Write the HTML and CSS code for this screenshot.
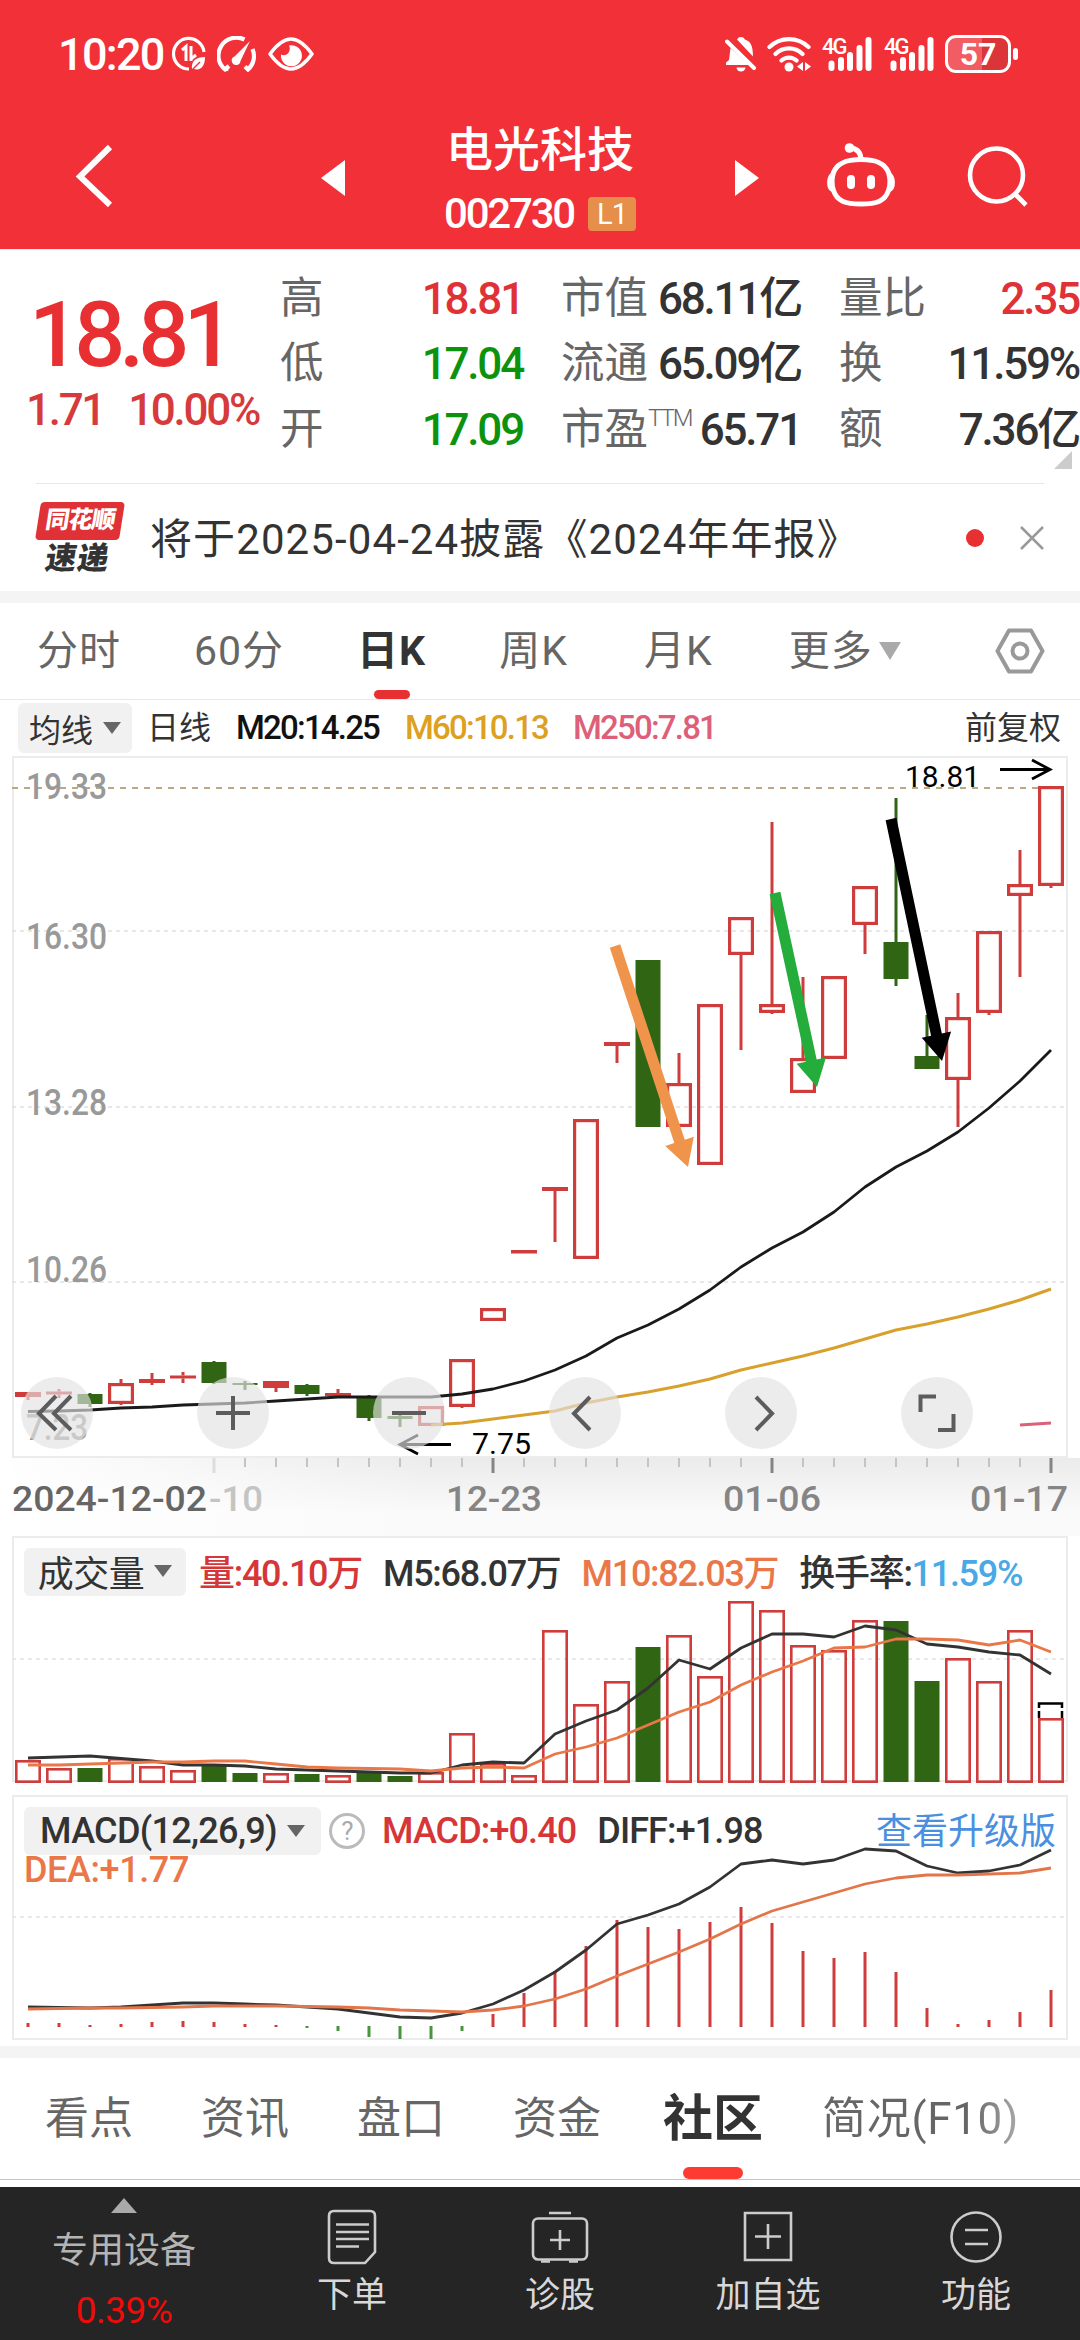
FILE: index.html
```
<!DOCTYPE html>
<html lang="zh-CN">
<head>
    <meta charset="UTF-8">
    <meta name="viewport" content="width=device-width, initial-scale=1.0">
    <title>电光科技 002730</title>
    <link rel="stylesheet" href="styles.css">
</head>
<body>
    <header class="top">
        <div class="status">
            <div class="status-left">
                <span class="clock">10:20</span>
                <svg width="36" height="36" viewBox="0 0 36 36" fill="none" stroke="#fff" stroke-width="3.2">
                    <path d="M33 16A15.3 15.3 0 1 0 18 33"/>
                    <path d="M11 14l4-3.5V25M20 10v15M20 23l5-4" stroke-width="3"/>
                    <path d="M21 33c-1-8 4-12 13-12 0 9-4 14-11 12z" fill="#fff" stroke="none"/>
                    <path d="M21 34l8-8" stroke="#f23037" stroke-width="1.5"/>
                </svg>
                <svg class="gauge" width="40" height="36" viewBox="0 0 40 36" fill="none" stroke="#fff" stroke-width="4.2">
                    <path d="M11 32.500l-3 1A18 18 0 0 1 27.500 3.500M35.500 13a18 18 0 0 1-4.500 20.500l-3-3"/>
                    <path d="M7 34l5-4" />
                    <path d="M33 5L23.500 25a4.400 4.400 0 1 1-6-4.500z" fill="#fff" stroke="none"/>
                </svg>
                <svg width="46" height="34" viewBox="0 0 46 34">
                    <path d="M2 17C10 6 17 2 23 2s13 4 21 15C36 28 29 32 23 32S10 28 2 17z" fill="none" stroke="#fff" stroke-width="3.500" stroke-linejoin="round"/>
                    <path d="M21 8.500a10.500 10.500 0 1 1-8 9c5 3 11-3 8-9z" fill="#fff"/>
                </svg>
            </div>
            <div class="status-right">
                <svg width="32" height="36" viewBox="0 0 32 36" fill="#fff">
                    <path d="M12 3.500a4.500 4.500 0 0 1 8 0c6 2 8 7 8 17z"/>
                    <path d="M5.500 12L24 29H1v-2.500l3-2.500z"/>
                    <path d="M2 5.500L29 32" stroke="#fff" stroke-width="4" stroke-linecap="round"/>
                    <path d="M11.500 31.500h9a4.500 4 0 0 1-9 0z"/>
                </svg>
                <svg class="wifi" width="44" height="36" viewBox="0 0 44 36" fill="none" stroke="#fff" stroke-width="4.200" stroke-linecap="round">
                    <path d="M2.500 11a28 28 0 0 1 39 0M8.500 18a19 19 0 0 1 27 0M14.500 24.500a11 11 0 0 1 15 0"/>
                    <circle cx="22" cy="31" r="4.500" fill="#fff" stroke="none"/>
                    <path d="M36 26v9l-6-4.500zM38 26v9l6-4.500z" fill="#fff" stroke="none"/>
                </svg>
                <svg class="sim" width="50" height="36" viewBox="0 0 50 36" stroke="#fff" stroke-width="6" stroke-linecap="round">
                    <text class="net" x="0" y="18">4G</text>
                    <path d="M9.500 27.500v4.500M19 24v8M28 19v13M37.500 12v20M46.500 4v28"/>
                </svg>
                <svg class="sim sim2" width="50" height="36" viewBox="0 0 50 36" stroke="#fff" stroke-width="6" stroke-linecap="round">
                    <text class="net" x="0" y="18">4G</text>
                    <path d="M9.500 27.500v4.500M19 24v8M28 19v13M37.500 12v20M46.500 4v28"/>
                </svg>
                <div class="battery"><span>57</span></div>
                <i class="battery-cap"></i>
            </div>
        </div>
        <div class="title-bar">
            <svg class="back" width="40" height="66" viewBox="0 0 40 66" fill="none" stroke="#fff" stroke-width="6">
                <path d="M35 4L5 33.500 35 62"/>
            </svg>
            <svg class="prev" width="24" height="38" viewBox="0 0 24 38"><path d="M24 1v36L0 19z" fill="#fff"/></svg>
            <div class="stock">
                <h1>电光科技</h1>
                <p><span>002730</span><b>L1</b></p>
            </div>
            <svg class="next" width="24" height="38" viewBox="0 0 24 38"><path d="M0 1v36l24-18z" fill="#fff"/></svg>
            <svg class="robot" width="72" height="66" viewBox="0 0 72 66" fill="none" stroke="#fff" stroke-width="5">
                <path d="M36 16.500c16 0 24 4 27.500 13 2 6 2 12 0 18C60 58 52 61 36 61S12 58 8.500 47.500c-2-6-2-12 0-18C12 20.500 20 16.500 36 16.500z"/>
                <path d="M36 17c0-7-3-11-10-12" />
                <circle cx="24.500" cy="5" r="4.800" fill="#fff" stroke="none"/>
                <path d="M8 30c-6 1-7 17 0 18zM64 30c6 1 7 17 0 18z" fill="#fff" stroke-width="2"/>
                <path d="M26 36v6M46 36v6" stroke-width="8" stroke-linecap="round"/>
            </svg>
            <svg class="search" width="62" height="66" viewBox="0 0 62 66" fill="none" stroke="#fff" stroke-width="4.600">
                <circle cx="29.500" cy="32" r="26.500"/>
                <path d="M48 51l11 11"/>
            </svg>
        </div>
    </header>

    <section class="quote">
        <div class="price up">
            <strong>18.81</strong>
            <p><span>1.71</span><span>10.00%</span></p>
        </div>
        <dl class="stats">
            <div><dt>高</dt><dd class="up">18.81</dd></div>
            <div><dt>市值</dt><dd>68.11亿</dd></div>
            <div><dt>量比</dt><dd class="up">2.35</dd></div>
            <div><dt>低</dt><dd class="down">17.04</dd></div>
            <div><dt>流通</dt><dd>65.09亿</dd></div>
            <div><dt>换</dt><dd>11.59%</dd></div>
            <div><dt>开</dt><dd class="down">17.09</dd></div>
            <div><dt>市盈<sup>TTM</sup></dt><dd>65.71</dd></div>
            <div><dt>额</dt><dd>7.36亿</dd></div>
        </dl>
        <i class="more-corner"></i>
    </section>

    <section class="news">
        <div class="news-logo">
            <span class="logo-top">同花顺</span>
            <span class="logo-bottom">速递</span>
        </div>
        <p>将于2025-04-24披露《2024年年报》</p>
        <i class="dot"></i>
        <svg width="24" height="26" viewBox="0 0 24 26" stroke="#999" stroke-width="2.500"><path d="M1 2l22 22M23 2L1 24"/></svg>
    </section>

    <nav class="period">
        <a>分时</a>
        <a>60分</a>
        <a class="on">日K</a>
        <a>周K</a>
        <a>月K</a>
        <a>更多<i class="tri"></i></a>
        <svg width="50" height="46" viewBox="0 0 50 46" fill="none" stroke="#999" stroke-width="4">
            <path d="M14 2.500h22L47.500 23 36 43.500H14L2.500 23z" stroke-linejoin="round"/>
            <circle cx="25" cy="23" r="7.500"/>
        </svg>
    </nav>

    <div class="ma-row">
        <button class="pick">均线<i class="tri"></i></button>
        <span class="ma-name">日线</span>
        <span class="ma20">M20:14.25</span>
        <span class="ma60">M60:10.13</span>
        <span class="ma250">M250:7.81</span>
        <span class="fq">前复权</span>
    </div>

    <div class="panel kline">
        <svg id="kline" viewBox="12 756 1056 702"></svg>
        <div class="tools">
            <button><svg viewBox="0 0 72 72"><path d="M35 19L18 36.500 35 53M50 19L33 36.500 50 53"/></svg></button>
            <button><svg viewBox="0 0 72 72"><path d="M19 36h34M36 19v34"/></svg></button>
            <button><svg viewBox="0 0 72 72"><path d="M19 36h34"/></svg></button>
            <button><svg viewBox="0 0 72 72"><path d="M41 20L25 36.500 41 53"/></svg></button>
            <button><svg viewBox="0 0 72 72"><path d="M31 20l16 16.500L31 53"/></svg></button>
            <button><svg viewBox="0 0 72 72"><path d="M35 19.500H19.500V35M37 53h15.500V37"/></svg></button>
        </div>
    </div>

    <div class="axis"><svg id="axis" viewBox="0 1458 1080 78"></svg></div>

    <div class="panel volume">
        <svg id="volume" viewBox="12 1536 1056 246"></svg>
        <div class="legend">
            <button class="pick">成交量<i class="tri"></i></button>
            <span class="red">量:40.10万</span>
            <span>M5:68.07万</span>
            <span class="orange">M10:82.03万</span>
            <span>换手率:<em>11.59%</em></span>
        </div>
    </div>

    <div class="panel macd">
        <svg id="macd" viewBox="12 1795 1056 245"></svg>
        <div class="legend">
            <button class="pick">MACD(12,26,9)<i class="tri"></i></button>
            <i class="help">?</i>
            <span class="red">MACD:+0.40</span>
            <span>DIFF:+1.98</span>
            <a class="upgrade">查看升级版</a>
        </div>
        <div class="dea orange">DEA:+1.77</div>
    </div>

    <nav class="info-tabs">
        <a>看点</a>
        <a>资讯</a>
        <a>盘口</a>
        <a>资金</a>
        <a class="on">社区</a>
        <a class="fade">简况(F10)</a>
    </nav>

    <footer class="bottom">
        <div class="sector">
            <i></i>
            <span>专用设备</span>
            <b>0.39%</b>
        </div>
        <div class="item">
            <svg width="50" height="56" viewBox="0 0 50 56">
                <path d="M7 2h36q5 0 5 5v36L38 54H7q-5 0-5-5V7q0-5 5-5z"/>
                <path d="M9 15.500h33M9 23h33M9 30h33M9 37.500h23"/>
            </svg>
            <span>下单</span>
        </div>
        <div class="item">
            <svg width="58" height="56" viewBox="0 0 58 56">
                <rect x="2" y="9.500" width="54" height="41" rx="5"/>
                <path d="M18 4h22M29 21v20M19 31h20M10 52.500h9M38 52.500h9"/>
            </svg>
            <span>诊股</span>
        </div>
        <div class="item">
            <svg width="50" height="56" viewBox="0 0 50 56">
                <path d="M2 4h46v47H2zM25 15v25M12 27.500h26"/>
            </svg>
            <span>加自选</span>
        </div>
        <div class="item">
            <svg width="52" height="56" viewBox="0 0 52 56">
                <circle cx="26" cy="28" r="24.500"/>
                <path d="M15 21h23M15 35h23"/>
            </svg>
            <span>功能</span>
        </div>
    </footer>

    <script src="chart.js"></script>
</body>
</html>
```
FILE: styles.css
```
* {
    box-sizing: border-box;
    margin: 0;
    padding: 0;
}
body {
    width: 1080px;
    height: 2340px;
    overflow: hidden;
    background: #fff;
    color: #333;
    font-family: Roboto, "Noto Sans CJK SC", sans-serif;
}
svg {
    display: block;
    flex: none;
}
button {
    border: 0;
    font-family: inherit;
    color: inherit;
}
i, em {
    font-style: normal;
}
.up { color: #e03236; }
.down { color: #0d920d; }
.red { color: #d63638; }
.orange { color: #ea7747; }

/* header */
.top {
    height: 250px;
    background: #f23037;
    border-bottom: 1px solid #ffe4e8;
    color: #fff;
}
.status {
    height: 108px;
    padding: 0 62px 0 58px;
    display: flex;
    justify-content: space-between;
    align-items: center;
}
.status-left, .status-right {
    display: flex;
    align-items: center;
}
.clock {
    width: 113px;
    font-size: 45px;
    font-weight: 500;
    letter-spacing: -1.7px;
}
.gauge { margin: 0 11px 0 10px; }
.wifi { margin: 0 11px 0 10px; }
.sim { overflow: visible; }
.sim2 { margin: 0 11px 0 12px; }
.net {
    font-size: 22px;
    font-weight: 500;
    letter-spacing: -2px;
    fill: #fff;
    stroke: none;
}
.battery {
    width: 66px;
    height: 38px;
    border: 3px solid #fff;
    border-radius: 11px;
    background: linear-gradient(90deg, #f15d62 57%, #db353a 57%);
    text-align: center;
    font-size: 32px;
    line-height: 33px;
    font-weight: 700;
}
.battery-cap {
    width: 5px;
    height: 12px;
    margin-left: 2px;
    border-radius: 3px;
    background: #fff;
}
.title-bar {
    display: flex;
    height: 135px;
    align-items: center;
    padding-left: 75px;
}
.prev { margin: 4px 0 0 206px; }
.stock {
    width: 390px;
    padding-top: 12px;
    text-align: center;
}
.stock h1 {
    font-size: 47px;
    line-height: 60px;
    font-weight: 500;
}
.stock p {
    display: flex;
    justify-content: center;
    align-items: center;
    height: 60px;
    margin-top: 4px;
    font-size: 42px;
    font-weight: 500;
    letter-spacing: -2.2px;
}
.stock b {
    width: 48px;
    height: 34px;
    margin-left: 14px;
    border-radius: 4px;
    background: #e58f4a;
    font-size: 29px;
    line-height: 34px;
    font-weight: 400;
    letter-spacing: -1px;
}
.next { margin-top: 4px; }
.robot { margin-left: 66px; }
.search { margin-left: 70px; }

/* quote */
.quote {
    position: relative;
    display: flex;
    height: 233px;
    padding-top: 16px;
}
.price {
    width: 280px;
    padding-left: 29px;
}
.price strong {
    display: block;
    height: 104px;
    margin-top: 18px;
    font-size: 90px;
    line-height: 104px;
    font-weight: 500;
    letter-spacing: -6px;
    color: #e83032;
}
.price p {
    display: flex;
    justify-content: space-between;
    width: 233px;
    margin: -1px 0 0 -3px;
    font-size: 44px;
    line-height: 46px;
    font-weight: 500;
    letter-spacing: -2.3px;
    color: #d63a3c;
}
.stats {
    display: grid;
    grid-template-columns: 243px 240px 240px;
    column-gap: 38px;
    grid-auto-rows: 65.5px;
}
.stats div {
    display: flex;
    justify-content: space-between;
    align-items: center;
    font-size: 43.5px;
    line-height: 60px;
    white-space: nowrap;
}
.stats dt { color: #666; }
.stats dd {
    font-size: 44px;
    font-weight: 500;
    letter-spacing: -2.2px;
}
.stats sup {
    font-size: 24px;
    font-weight: 300;
    line-height: 1;
    vertical-align: 18px;
    letter-spacing: -2px;
}
.more-corner {
    position: absolute;
    right: 8px;
    bottom: 14px;
    border-left: 18px solid transparent;
    border-bottom: 18px solid #ccc;
}

/* news */
.news {
    display: flex;
    align-items: center;
    height: 108px;
    margin: 0 36px;
    border-top: 1px solid #e8e8e8;
}
.news-logo {
    width: 90px;
    margin-right: 24px;
    padding-left: 2px;
}
.news-logo span {
    display: block;
    font-weight: 900;
    text-align: center;
    transform: skewX(-9deg);
}
.logo-top {
    width: 84px;
    height: 38px;
    border-radius: 4px;
    background: #e03236;
    color: #fff;
    font-size: 24px;
    line-height: 37px;
    letter-spacing: -1px;
}
.logo-bottom {
    width: 80px;
    height: 34px;
    font-size: 31px;
    line-height: 38px;
    letter-spacing: 1px;
}
.news p {
    flex: 1;
    margin-top: -5px;
    font-size: 42px;
    letter-spacing: 1.1px;
    white-space: nowrap;
}
.dot {
    width: 18px;
    height: 18px;
    margin-right: 36px;
    border-radius: 50%;
    background: #e83032;
}

/* period tabs */
.period {
    display: flex;
    align-items: center;
    height: 109px;
    padding-left: 37px;
    border-top: 12px solid #f4f4f4;
    border-bottom: 1px solid #e8e8e8;
    font-size: 41px;
    letter-spacing: 1px;
    color: #666;
}
.period a {
    position: relative;
    margin-right: 73px;
    line-height: 96px;
}
.period a:nth-child(n+4) { margin-right: 76px; }
.period a:nth-child(6) {
    display: flex;
    align-items: center;
    margin-right: 94px;
}
.period .on, .info-tabs .on {
    color: #333;
    font-weight: 700;
}
.period .on::after, .info-tabs .on::after {
    content: '';
    position: absolute;
    left: 50%;
    bottom: 0;
    width: 36px;
    height: 9px;
    margin-left: -18px;
    border-radius: 5px;
    background: #e83032;
}
.tri {
    display: inline-block;
    border: 9px solid transparent;
    border-top: 12px solid #666;
    border-bottom: 0;
}
.period .tri {
    margin-left: 6px;
    border-width: 18px 11px 0;
    border-top-color: #aaa;
}

/* moving averages */
.ma-row {
    display: flex;
    align-items: center;
    height: 56px;
    padding: 0 19px 0 18px;
    font-size: 33px;
    line-height: 54px;
    font-weight: 500;
    letter-spacing: -1.8px;
}
.pick {
    display: flex;
    justify-content: center;
    align-items: center;
    border-radius: 6px;
    background: #f1f1f1;
    font-size: 32px;
}
.pick .tri { margin-left: 10px; }
.ma-row .pick {
    width: 114px;
    height: 50px;
    letter-spacing: 0;
}
.ma-row .ma-name, .ma-row .fq { font-weight: 400; letter-spacing: 0; font-size: 32px; }
.ma-name { margin-left: 15px; }
.ma20 { margin-left: 25px; color: #111; width: 169px; }
.ma60 { color: #dda01f; width: 168px; }
.ma250 { color: #dd6078; }
.fq { margin-left: auto; }

/* chart panels */
.panel {
    position: relative;
    margin: 0 12px;
    border: 2px solid #ececec;
}
.panel > svg {
    position: absolute;
    left: -2px;
    top: -2px;
    width: 1056px;
    overflow: visible;
}
.kline { height: 702px; }
.tools {
    position: absolute;
    left: 7px;
    bottom: 7px;
    display: flex;
    gap: 104px;
}
.tools button {
    width: 72px;
    height: 72px;
    border-radius: 50%;
    background: rgba(226, 226, 226, .66);
}
.tools svg {
    fill: none;
    stroke: #5c5c5c;
    stroke-width: 4;
}
.axis {
    height: 78px;
    background: linear-gradient(90deg, #fff, rgba(255, 255, 255, 0) 40%), linear-gradient(#ebebeb, #fafafa 70%);
}
.volume { height: 246px; background: #fff; }
.macd { height: 245px; margin-top: 13px; }
.legend {
    position: relative;
    display: flex;
    align-items: center;
    height: 48px;
    margin-top: 10px;
    padding-left: 10px;
    font-size: 36px;
    font-weight: 500;
    letter-spacing: -1.3px;
    white-space: nowrap;
}
.volume .pick {
    width: 162px;
    height: 48px;
    margin-right: 13px;
    padding-bottom: 3px;
    font-size: 36px;
    letter-spacing: -.5px;
}
.volume .legend span {
    margin: -5px 21px 0 0;
}
.legend em { color: #48a9e6; }
.macd .legend { letter-spacing: -.9px; }
.macd .pick {
    width: 297px;
    height: 48px;
    margin-right: 8px;
    font-size: 36px;
    font-weight: 500;
    letter-spacing: -.7px;
}
.help {
    width: 36px;
    height: 36px;
    margin-right: 17px;
    border: 3px solid #bbb;
    border-radius: 50%;
    color: #aaa;
    font-size: 26px;
    font-weight: 400;
    line-height: 31px;
    text-align: center;
}
.macd .legend span { margin-right: 21px; }
.legend .upgrade {
    margin: -6px 0 0 auto;
    padding-right: 10px;
    color: #4a8fe0;
    font-weight: 400;
    letter-spacing: 0;
}
.dea {
    position: relative;
    margin-left: 10px;
    font-size: 36px;
    font-weight: 500;
    line-height: 31px;
    letter-spacing: -.4px;
}

/* chart texts, drawn by chart.js */
.y-label { font-size: 36px; font-weight: 500; fill: #999; }
.x-label { font-size: 35px; font-weight: 500; fill: #858585; }
.x-first { fill: #666; }
.x-faded { fill: #c4c4c4; }
.mark { font-size: 30px; fill: #000; }

/* info tabs */
.info-tabs {
    display: flex;
    align-items: center;
    height: 134px;
    margin-top: 6px;
    padding-left: 45px;
    border-top: 12px solid #f4f4f4;
    border-bottom: 1px solid #c4c4c4;
    font-size: 44px;
    color: #666;
}
.info-tabs a {
    position: relative;
    margin-right: 68px;
    line-height: 120px;
    white-space: nowrap;
}
.info-tabs a:nth-child(4) { margin-right: 62px; }
.info-tabs .on { font-size: 50px; margin-right: 59px; }
.info-tabs .on::after {
    width: 60px;
    height: 12px;
    margin-left: -30px;
    border-radius: 6px;
    background: #fd3b33;
}
.info-tabs .fade {
    letter-spacing: .7px;
    background: linear-gradient(90deg, #666 75%, #aaa);
    -webkit-background-clip: text;
    background-clip: text;
    color: transparent;
}

/* bottom bar */
.bottom {
    display: grid;
    grid-template-columns: 248px repeat(4, 208px);
    height: 153px;
    margin-top: 7px;
    background: #252525;
    color: #d8d8d8;
    font-size: 35px;
    text-align: center;
}
.sector {
    display: flex;
    flex-direction: column;
    align-items: center;
    padding-top: 11px;
    color: #b4b4b4;
}
.sector i {
    border: 13px solid transparent;
    border-top: 0;
    border-bottom: 15px solid #aaa;
}
.sector span {
    margin-top: 14px;
    font-size: 36px;
    line-height: 48px;
}
.sector b {
    margin-top: 12px;
    color: #f10a0a;
    font-size: 37px;
    line-height: 48px;
    font-weight: 400;
    letter-spacing: -.5px;
}
.item {
    display: flex;
    flex-direction: column;
    align-items: center;
    padding-top: 22px;
}
.item svg {
    fill: none;
    stroke: #ccc;
    stroke-width: 2.6;
}
.item span {
    margin-top: 7px;
    line-height: 48px;
}
```
FILE: chart.js
```
var RED = "#cf3c3c";
var GREEN = "#306514";
var STEP = 31;
var FIRST = 28;

function cx(i) {
    return FIRST + i * STEP;
}
function rect(x, y, w, h, fill) {
    return `<rect x="${x}" y="${y}" width="${w}" height="${h}" fill="${fill}"/>`;
}
function box(i, top, bottom, sw) {
    return `<rect x="${cx(i) - 13 + sw / 2}" y="${top + sw / 2}" width="${26 - sw}" height="${bottom - top - sw}" fill="none" stroke="${RED}" stroke-width="${sw}"/>`;
}
// hollow bar for a rising day, solid bar for a falling one
function bar(i, top, bottom, up) {
    if (!up) return rect(cx(i) - 12.5, top, 25, bottom - top, GREEN);
    if (bottom - top <= 8) return rect(cx(i) - 13, top, 26, bottom - top, RED);
    return box(i, top, bottom, 3.2);
}
function line(ys, start, color, w) {
    var pts = ys.map((y, k) => cx(start + k) + "," + y).join(" ");
    return `<polyline points="${pts}" fill="none" stroke="${color}" stroke-width="${w}" stroke-linejoin="round"/>`;
}
function grid(y, color, w, dash) {
    return `<path d="M12 ${y}H1066" stroke="${color}" stroke-width="${w}" stroke-dasharray="${dash}"/>`;
}
function label(x, y, text, cls, len) {
    return `<text x="${x}" y="${y}" class="${cls}" textLength="${len}" lengthAdjust="spacingAndGlyphs">${text}</text>`;
}
// trend arrow: thick line with a triangle head
function arrow(x1, y1, x2, y2, color) {
    var len = Math.hypot(x2 - x1, y2 - y1);
    var deg = Math.atan2(y2 - y1, x2 - x1) * 180 / Math.PI;
    return `<path transform="translate(${x1} ${y1}) rotate(${deg})" fill="${color}" d="M0 -5.500H${len - 27}V-15L${len} 0L${len - 27} 15V5.500H0z"/>`;
}

// [high, body top, body bottom, low, rising]
var candles = [
    [1392, 1392, 1397, 1400, 1], [1389, 1391.5, 1394.5, 1398, 1], [1393, 1394, 1404, 1407, 0],
    [1379, 1383, 1404, 1405, 1], [1373, 1379, 1383, 1385, 1], [1372, 1375.5, 1378.5, 1383, 1],
    [1361, 1362, 1383, 1384, 0], [1381, 1383, 1385, 1390, 0], [1381, 1381, 1388, 1392, 1],
    [1384, 1385, 1394, 1396, 0], [1389, 1393, 1396, 1397, 1], [1395, 1397, 1418, 1421, 0],
    [1412, 1416, 1419, 1427, 0], [1406, 1406, 1426, 1426, 1], [1359, 1359, 1407, 1408, 1],
    [1308, 1308, 1321, 1321, 1], [1250, 1250, 1253.5, 1253.5, 1], [1187, 1187, 1191, 1242, 1],
    [1119, 1119, 1259, 1259, 1], [1042, 1042, 1046, 1063, 1], [960, 960, 1127, 1127, 0],
    [1053, 1083, 1127, 1127, 1], [1004, 1004, 1165, 1165, 1], [917, 917, 955, 1050, 1],
    [822, 1004, 1013, 1014, 1], [977, 1058, 1093, 1093, 1], [976, 976, 1059, 1059, 1],
    [886, 886, 925, 954, 1], [798, 942, 979, 986, 0], [1015, 1056, 1069, 1069, 0],
    [993, 1017, 1080, 1127, 1], [931, 931, 1013, 1015, 1], [850, 884, 896, 977, 1],
    [786, 786, 886, 888, 1]
];
var ma20 = [1411.5, 1411, 1410, 1408, 1407, 1405, 1404, 1403, 1401, 1399, 1397, 1397, 1397, 1397, 1394, 1389, 1381, 1370, 1356, 1338, 1325, 1309, 1290, 1267, 1248, 1232, 1212, 1187, 1167, 1151, 1132, 1108, 1081, 1050];
var ma60 = [1425, 1423, 1419, 1415, 1411, 1403, 1397, 1392, 1386, 1379, 1370, 1363, 1356, 1348, 1339, 1330, 1324, 1317, 1309, 1300, 1289];

function drawKline() {
    var s = grid(788, "#bba985", 2, "6 6");
    [931, 1107, 1282].forEach(y => s += grid(y, "#e0e0e0", 1.5, "4 4"));
    [["19.33", 799], ["16.30", 949], ["13.28", 1115], ["10.26", 1282], ["7.23", 1440]].forEach(l => {
        s += label(26, l[1], l[0], "y-label", l[0].length > 4 ? 81 : 62);
    });
    candles.forEach((c, i) => {
        var color = c[4] ? RED : GREEN;
        if (c[1] > c[0]) s += rect(cx(i) - 1.5, c[0], 3, c[1] - c[0], color);
        if (c[3] > c[2]) s += rect(cx(i) - 1.5, c[2], 3, c[3] - c[2], color);
        s += bar(i, c[1], c[2], c[4]);
    });
    s += line(ma20, 0, "#1a1a1a", 2.8);
    s += line(ma60, 13, "#d8a02c", 3);
    s += line([1425, 1423], 32, "#dd6078", 3);
    s += label(905, 787, "18.81", "mark", 75);
    s += label(472, 1454, "7.75", "mark", 59);
    s += `<path d="M1000 769.5H1050M1032 760L1050 769.500 1032 779M451 1444.500H400M418 1435L400 1444.500 418 1454" fill="none" stroke="#000" stroke-width="2.800"/>`;
    s += arrow(615, 946, 688, 1167, "#f0944c");
    s += arrow(775, 893, 817, 1087, "#25ad3b");
    s += arrow(891, 819, 942, 1061, "#000");
    document.querySelector("#kline").innerHTML = s;
}

function drawAxis() {
    var s = "";
    for (var i = 6; i < 34; i++) {
        var big = i % 9 == 6;
        s += rect(cx(i) - (big ? 1.5 : 1), 1458, big ? 3 : 2, big ? 15 : 9, i == 6 ? "#ddd" : big ? "#858585" : "#c4c4c4");
    }
    s += label(12, 1511, "2024-12-02", "x-label x-first", 195);
    s += label(209, 1511, "-10", "x-label x-faded", 54);
    s += label(446, 1511, "12-23", "x-label", 96);
    s += label(723, 1511, "01-06", "x-label", 98);
    s += label(970, 1511, "01-17", "x-label", 98);
    document.querySelector("#axis").innerHTML = s;
}

var vol = [1760, 1768, 1768, 1758, 1766, 1770, 1765, 1773, 1773, 1774, 1775, 1773, 1776, 1772, 1733, 1763, 1775, 1630, 1704, 1681, 1647, 1635, 1676, 1601, 1610, 1645, 1650, 1620, 1621, 1681, 1658, 1681, 1630, 1718];
var volM5 = [1758, 1757, 1756, 1758.5, 1761, 1765, 1765, 1766, 1769, 1770, 1771, 1772, 1773, 1773, 1765, 1762, 1763, 1734, 1721, 1710, 1688, 1660, 1669, 1648, 1634, 1634, 1637, 1626, 1630, 1644, 1647, 1652, 1655, 1674];
var volM10 = [1765, 1765, 1764, 1763, 1762, 1762, 1761, 1761, 1764, 1767, 1768, 1768.5, 1769, 1771, 1768, 1767, 1768, 1754, 1747, 1738, 1725, 1712, 1702, 1685, 1672, 1661, 1648, 1647, 1639, 1639, 1640, 1645, 1640, 1652];

function drawVolume() {
    var s = grid(1659, "#e8e8e8", 2, "4 4");
    vol.forEach((y, i) => {
        s += candles[i][4] ? box(i, y, 1783, 2.6) : bar(i, y, 1782, 0);
    });
    s += line(volM5, 0, "#333", 2.8);
    s += line(volM10, 0, "#ea7747", 2.8);
    // estimated full-day volume
    s += `<path d="M1039 1708V1703.500H1062V1708M1039 1711V1718M1062 1711V1718" fill="none" stroke="#000" stroke-width="2.500"/>`;
    document.querySelector("#volume").innerHTML = s;
}

var hist = [-4, -4, -2, -3, -5, -6, -5, -3, -2, 2, 5, 11, 13, 13, 5, -13, -34, -56, -81, -107, -100, -98, -105, -120, -104, -76, -69, -75, -55, -19, -3, -7, -15, -37];
var diff = [2007, 2007.5, 2008, 2007, 2005, 2003, 2003, 2004, 2005, 2007, 2009, 2013, 2017, 2018, 2013, 2004, 1990, 1972, 1950, 1924, 1915, 1904, 1887, 1864, 1860, 1864, 1860, 1849, 1851, 1866, 1873, 1871, 1865, 1850];
var dea = [2009, 2008.5, 2008, 2008, 2007.5, 2007, 2006, 2006, 2006, 2006.5, 2007, 2008, 2010, 2011, 2012, 2010, 2006, 1999, 1989, 1976, 1964, 1952, 1939, 1924, 1911, 1902, 1893, 1884, 1878, 1875, 1875, 1874, 1873, 1868];

function drawMacd() {
    var s = grid(1917, "#e8e8e8", 2, "4 4");
    hist.forEach((h, i) => {
        s += rect(cx(i) - 1.5, h < 0 ? 2027 + h : 2026, 3, Math.abs(h), h < 0 ? RED : "#489440");
    });
    s += line(diff, 0, "#333", 2.8);
    s += line(dea, 0, "#e2764a", 2.8);
    document.querySelector("#macd").innerHTML = s;
}

drawKline();
drawAxis();
drawVolume();
drawMacd();
```
